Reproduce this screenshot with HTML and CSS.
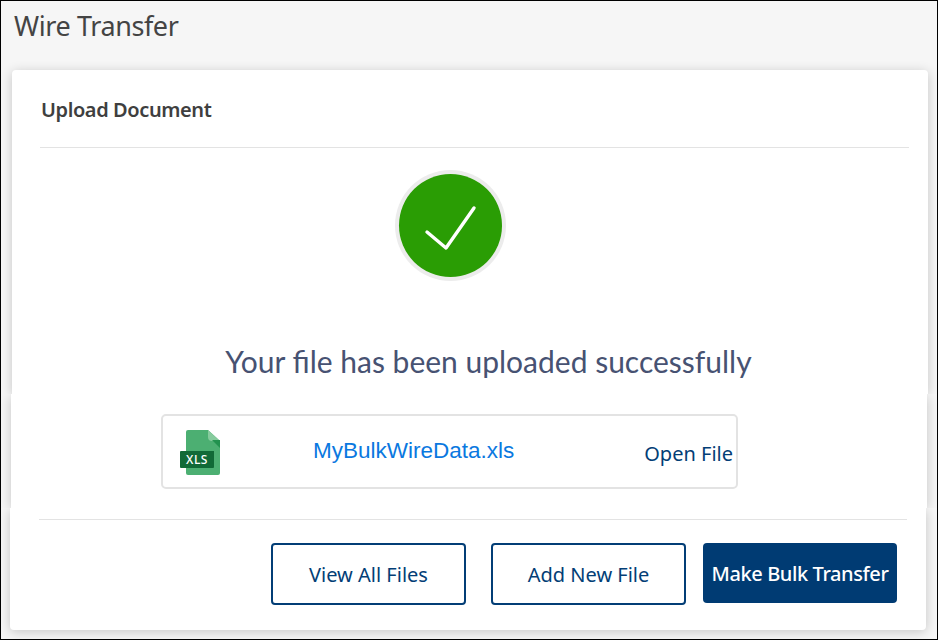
FILE: index.html
```html
<!DOCTYPE html>
<html lang="en">
<head>
<meta charset="utf-8">
<title>Wire Transfer</title>
<link rel="stylesheet" href="styles.css">
</head>
<body>
<main class="frame">
  <h1 class="page-title">Wire Transfer</h1>
  <section class="card">
    <div class="card-upper">
      <h2 class="card-title">Upload Document</h2>
      <hr class="rule rule-top">
      <div class="success">
        <svg class="success-icon" width="112" height="112" viewBox="0 0 112 112" aria-hidden="true">
          <circle cx="55.5" cy="55.5" r="55.5" fill="#ececec"/>
          <circle cx="55.5" cy="55.5" r="51.5" fill="#2a9d04"/>
          <path d="M32 62 L51 78 L79 38" fill="none" stroke="#fff" stroke-width="3.4" stroke-linecap="round" stroke-linejoin="round"/>
        </svg>
        <p class="success-text">Your file has been uploaded successfully</p>
      </div>
    </div>
    <div class="card-middle">
      <div class="file-row">
        <svg class="xls-icon" width="40" height="46" viewBox="0 0 40 46" aria-hidden="true">
          <path d="M6 2 a2 2 0 0 1 2-2 H28 L40 11 V43 a2 2 0 0 1-2 2 H8 a2 2 0 0 1-2-2 Z" fill="#4caf72"/>
          <path d="M28 0 L40 11 V11 H32 a4 4 0 0 1-4-4 Z" fill="#86cb9d"/>
          <path d="M32 10 H40 V18 Z" fill="#22924f"/>
          <path d="M0 22 a1 1 0 0 1 1-1 H34 V37 a1 1 0 0 1-1 1 H1 a1 1 0 0 1-1-1 Z" fill="#116a37"/>
          <text class="xls-label" x="17" y="34" text-anchor="middle">XLS</text>
        </svg>
        <a class="file-name" href="#">MyBulkWireData.xls</a>
        <a class="open-file" href="#">Open File</a>
      </div>
    </div>
    <div class="card-lower">
      <hr class="rule rule-bottom">
      <div class="actions">
        <button class="btn btn-outline btn-view" type="button">View All Files</button>
        <button class="btn btn-outline btn-add" type="button">Add New File</button>
        <button class="btn btn-solid" type="button">Make Bulk Transfer</button>
      </div>
    </div>
  </section>
</main>
</body>
</html>
```
FILE: styles.css
```css
* { box-sizing: border-box; }
html, body { margin: 0; padding: 0; }
body { width: 938px; height: 640px; overflow: hidden; background: #f5f5f5; font-family: "Noto Sans", "Open Sans", sans-serif; }
.frame { width: 938px; height: 640px; border: 1px solid #000; background: #f6f6f6; padding: 8px 0 0 0; overflow: hidden; }
.page-title { margin: 0 0 0 13px; font-size: 27px; line-height: 34px; font-weight: 400; letter-spacing: -.4px; color: #444; }
.card { margin-top: 27px; }
.card-upper, .card-middle, .card-lower { background: #fff; box-shadow: 0 2px 12px rgba(0,0,0,.2); }
.card-upper { margin: 0 9px 0 11px; height: 324px; border-radius: 4px 4px 0 0; padding: 27px 19px 0 29px; clip-path: inset(-20px -20px 0 -20px); }
.card-middle { margin: 0 10px 0 10px; height: 114px; padding: 20px 0 0 150px; clip-path: inset(0 -20px); }
.card-lower { margin: 0 11px 0 9px; height: 122px; border-radius: 0 0 4px 4px; padding: 11px 19px 0 29px; clip-path: inset(0 -20px -20px -20px); }
.card-title { margin: 0; font-size: 20px; line-height: 26px; font-weight: 600; letter-spacing: -.4px; color: #3f3f3f; }
.rule { border: 0; border-top: 1px solid #e3e3e3; margin: 0; }
.rule-top { margin: 24px 0 0 -1px; }
.success { display: flex; flex-direction: column; align-items: center; }
.success-icon { display: block; margin: 22px 48px 0 0; }
.success-text { margin: 59px 0 0 27px; font-family: Lato, sans-serif; font-size: 30px; line-height: 40px; color: #475272; white-space: nowrap; }
.file-row { display: flex; align-items: center; width: 577px; height: 75px; border: 2px solid #e3e3e3; border-radius: 5px; padding: 0 3px 0 17px; }
.xls-icon { flex: none; margin-top: 3px; }
.xls-label { font-family: "Noto Sans", sans-serif; font-size: 12px; font-weight: 500; fill: #fff; letter-spacing: .5px; }
.file-name { margin: -1px 0 0 93px; font-family: "Liberation Sans", Arial, sans-serif; font-size: 22.5px; color: #0a78e0; text-decoration: none; }
.open-file { margin: 3px 0 0 auto; font-size: 20px; color: #033e76; text-decoration: none; }
.actions { display: flex; margin: 23px 10px 0 0; justify-content: flex-end; align-items: flex-start; }
.btn { font-family: "Noto Sans", sans-serif; font-size: 20px; border-radius: 4px; padding: 0; cursor: pointer; }
.btn-outline { width: 195px; height: 62px; background: #fff; border: 2px solid #033e76; color: #033e76; }
.btn-add { margin-left: 25px; }
.btn-solid { width: 194px; height: 60px; margin-left: 17px; background: #003b73; border: 0; color: #fff; font-weight: 500; letter-spacing: -.4px; }
```
